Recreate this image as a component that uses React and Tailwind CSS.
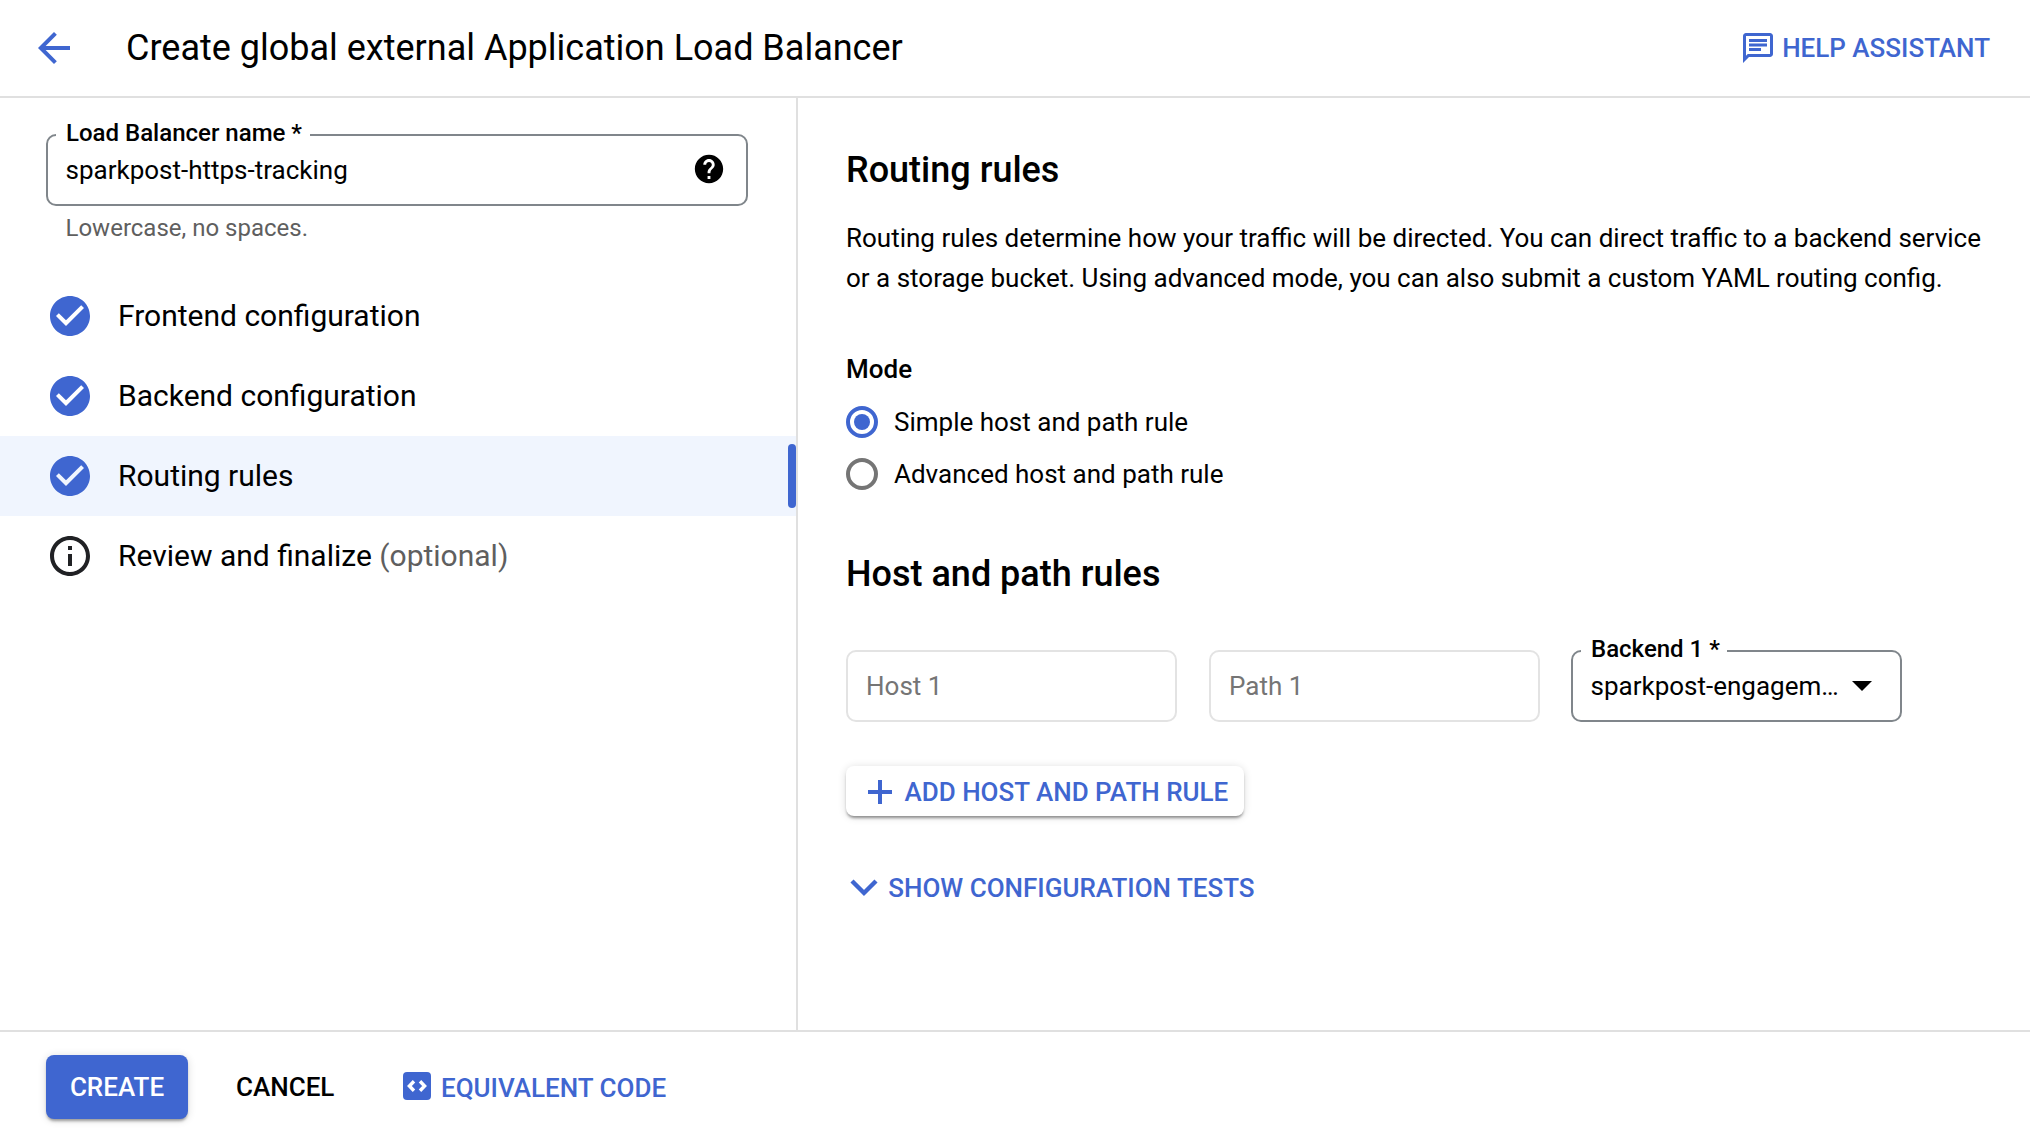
import { MdArrowBack, MdHelp, MdOutlineInfo, MdCheckCircle, MdOutlineChat, MdArrowDropDown } from "react-icons/md";

const steps = [
  { label: "Frontend configuration", done: true },
  { label: "Backend configuration", done: true },
  { label: "Routing rules", done: true, active: true },
  { label: "Review and finalize", note: "(optional)" },
];

function Step({ label, note, done, active }) {
  return (
    <li className={`relative flex h-20 items-center pl-[46px] ${active ? "bg-[#f0f5fe]" : ""}`}>
      {done ? (
        <MdCheckCircle className="size-12 text-[#3f66d0]" />
      ) : (
        <MdOutlineInfo className="size-12 text-[#202124]" />
      )}
      <span className="ml-6 text-[30px] leading-10">
        {label}
        {note && <span className="text-[#5f5f5f]"> {note}</span>}
      </span>
      {active && <span className="absolute right-0 top-2 h-16 w-2 rounded bg-[#3f66d0]" />}
    </li>
  );
}

function Outlined({ label, children, className = "" }) {
  return (
    <div className={`relative flex h-[72px] items-center rounded-[10px] border-2 border-[#80868b] pl-[17.5px] text-[26px] ${className}`}>
      <span className="absolute -top-[21px] left-2 bg-white pl-[10px] pr-[7.5px] text-2xl font-medium leading-[36px]">{label}</span>
      {children}
    </div>
  );
}

function EmptyField({ label }) {
  return (
    <div className="flex h-[72px] w-[331px] items-center rounded-[10px] border-2 border-[#e3e3e3] pl-[18px] text-[#757575]">
      {label}
    </div>
  );
}

function Radio({ label, checked }) {
  return (
    <div className="flex h-[52px] items-center">
      <span className={`flex size-8 items-center justify-center rounded-full border-4 ${checked ? "border-[#3f66d0]" : "border-[#757575]"}`}>
        {checked && <span className="size-4 rounded-full bg-[#3f66d0]" />}
      </span>
      <span className="ml-4">{label}</span>
    </div>
  );
}

export default function App() {
  return (
    <div className="flex h-[1140px] w-[2030px] flex-col overflow-hidden bg-white font-['Roboto',sans-serif] text-[26px] text-black">
      <header className="flex h-[98px] shrink-0 items-center border-b-2 border-[#e0e0e0] pl-[30px] pr-10">
        <MdArrowBack className="size-12 text-[#3f66d0]" />
        <h1 className="ml-12 text-4xl">Create global external Application Load Balancer</h1>
        <div className="ml-auto flex items-center font-medium text-[#3f66d0]">
          <MdOutlineChat className="size-9" />
          <span className="ml-[6px]">HELP ASSISTANT</span>
        </div>
      </header>

      <div className="flex min-h-0 flex-1">
        <aside className="w-[798px] shrink-0 border-r-2 border-[#e0e0e0] pt-9">
          <div className="pl-[46px] pr-12">
            <Outlined label="Load Balancer name *" className="pr-5">
              <span>sparkpost-https-tracking</span>
              <MdHelp className="mb-[2px] ml-auto size-[34px]" />
            </Outlined>
            <p className="mt-1 pl-[19.5px] text-2xl leading-9 text-[#5f5f5f]">Lowercase, no spaces.</p>
          </div>
          <ul className="mt-[30px]">
            {steps.map((s) => (
              <Step key={s.label} {...s} />
            ))}
          </ul>
        </aside>

        <main className="flex-1 pl-12 pt-12">
          <h2 className="text-4xl font-medium leading-[48px]">Routing rules</h2>
          <p className="mt-6 w-[1160px] leading-10">
            Routing rules determine how your traffic will be directed. You can direct traffic to a backend service
            or a storage bucket. Using advanced mode, you can also submit a custom YAML routing config.
          </p>
          <h3 className="mt-[55px] font-medium leading-8">Mode</h3>
          <div className="mt-[11px]">
            <Radio label="Simple host and path rule" checked />
            <Radio label="Advanced host and path rule" />
          </div>
          <h2 className="mt-[50px] text-4xl font-medium leading-[48px]">Host and path rules</h2>
          <div className="mt-[52px] flex">
            <EmptyField label="Host 1" />
            <div className="ml-8">
              <EmptyField label="Path 1" />
            </div>
            <Outlined label="Backend 1 *" className="ml-[31px] w-[331px]">
              <span>sparkpost-engagem…</span>
              <MdArrowDropDown className="-ml-px mb-[2px] size-12" />
            </Outlined>
          </div>
          <button className="mt-11 flex h-[50px] w-[398px] items-center rounded-lg pl-[22px] pt-[2px] font-medium text-[#3f66d0] shadow-[0_3px_3px_-1px_rgba(0,0,0,0.4),0_1px_8px_rgba(0,0,0,0.14)]">
            <svg className="size-6" viewBox="0 0 24 24" fill="none" stroke="currentColor" strokeWidth="4">
              <path d="M12 0V24M0 12H24" />
            </svg>
            <span className="ml-[12.5px]">ADD HOST AND PATH RULE</span>
          </button>
          <div className="mt-[52px] flex h-10 items-center font-medium text-[#3f66d0]">
            <svg className="ml-1 h-[18px] w-7" viewBox="0 0 28 18" fill="none" stroke="currentColor" strokeWidth="4.4">
              <path d="M2 2L14 14L26 2" />
            </svg>
            <span className="ml-[10.25px]">SHOW CONFIGURATION TESTS</span>
          </div>
        </main>
      </div>

      <footer className="flex h-[110px] shrink-0 items-center border-t-2 border-[#e0e0e0] pl-[46px] pt-[2px] font-medium">
        <button className="h-16 w-[142px] rounded-lg bg-[#3f66d0] text-white shadow-[0_3px_3px_-1px_rgba(0,0,0,0.35),0_1px_8px_rgba(0,0,0,0.14)]">
          CREATE
        </button>
        <span className="ml-12">CANCEL</span>
        <div className="ml-[68.6px] flex items-center text-[#3f66d0]">
          <svg className="mb-[2px] size-7" viewBox="0 0 28 28" fill="none">
            <rect width="28" height="28" rx="4" fill="currentColor" />
            <path d="M11 9.2L6.4 14L11 18.8M17 9.2L21.6 14L17 18.8" stroke="#fff" strokeWidth="3.4" />
          </svg>
          <span className="ml-[10px] mt-[2px]">EQUIVALENT CODE</span>
        </div>
      </footer>
    </div>
  );
}
